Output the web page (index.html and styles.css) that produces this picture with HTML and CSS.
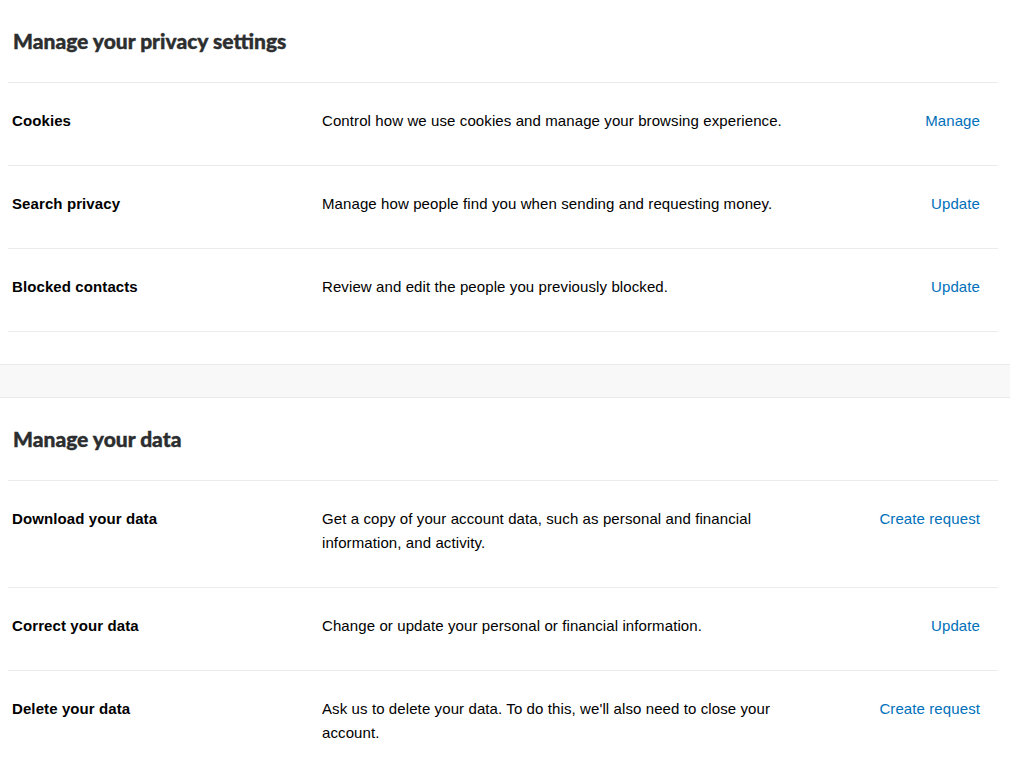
FILE: index.html
```html
<!DOCTYPE html>
<html lang="en">
<head>
<meta charset="utf-8">
<title>Privacy settings</title>
<link rel="stylesheet" href="styles.css">
</head>
<body>
  <section class="panel">
    <h2 class="panel-title">Manage your privacy settings</h2>
    <ul class="rows">
      <li class="row">
        <span class="row-label">Cookies</span>
        <span class="row-desc">Control how we use cookies and manage your browsing experience.</span>
        <a class="row-action" href="#">Manage</a>
      </li>
      <li class="row">
        <span class="row-label">Search privacy</span>
        <span class="row-desc">Manage how people find you when sending and requesting money.</span>
        <a class="row-action" href="#">Update</a>
      </li>
      <li class="row">
        <span class="row-label">Blocked contacts</span>
        <span class="row-desc">Review and edit the people you previously blocked.</span>
        <a class="row-action" href="#">Update</a>
      </li>
    </ul>
  </section>

  <div class="divider"></div>

  <section class="panel">
    <h2 class="panel-title">Manage your data</h2>
    <ul class="rows">
      <li class="row">
        <span class="row-label">Download your data</span>
        <span class="row-desc">Get a copy of your account data, such as personal and financial information, and activity.</span>
        <a class="row-action" href="#">Create request</a>
      </li>
      <li class="row">
        <span class="row-label">Correct your data</span>
        <span class="row-desc">Change or update your personal or financial information.</span>
        <a class="row-action" href="#">Update</a>
      </li>
      <li class="row">
        <span class="row-label">Delete your data</span>
        <span class="row-desc">Ask us to delete your data. To do this, we'll also need to close your account.</span>
        <a class="row-action" href="#">Create request</a>
      </li>
    </ul>
  </section>
</body>
</html>
```

FILE: styles.css
```css
* {
  box-sizing: border-box;
}

body {
  margin: 0;
  background: #ffffff;
  color: #000000;
  font-family: "Liberation Sans", Arial, sans-serif;
  font-size: 15px;
  line-height: 24px;
}

.panel {
  padding: 0 12px 0 8px;
}

.panel-title {
  margin: 0;
  height: 82px;
  display: flex;
  align-items: center;
  padding: 0 0 0 5px;
  font-family: Lato, "Liberation Sans", sans-serif;
  font-weight: 900;
  font-size: 21px;
  color: #2c2e2f;
  -webkit-text-stroke: 0.4px #2c2e2f;
  letter-spacing: 0;
}

.rows {
  list-style: none;
  margin: 0;
  padding: 0 0 32px;
}

.row {
  display: grid;
  grid-template-columns: 310px 470px 1fr;
  align-items: start;
  border-top: 1px solid #eaeced;
  padding: 26px 18px 32px 4px;
}

.row:last-child {
  border-bottom: 1px solid #eaeced;
}

.row-label {
  font-weight: 700;
  letter-spacing: 0.1px;
}

.row-desc {
  padding-right: 10px;
  letter-spacing: 0.1px;
}

.row-action {
  justify-self: end;
  color: #0070ba;
  text-decoration: none;
  letter-spacing: 0.1px;
}

.divider {
  height: 34px;
  background: #f8f8f8;
  border-top: 1px solid #eaeaea;
  border-bottom: 1px solid #eaeaea;
}
```
